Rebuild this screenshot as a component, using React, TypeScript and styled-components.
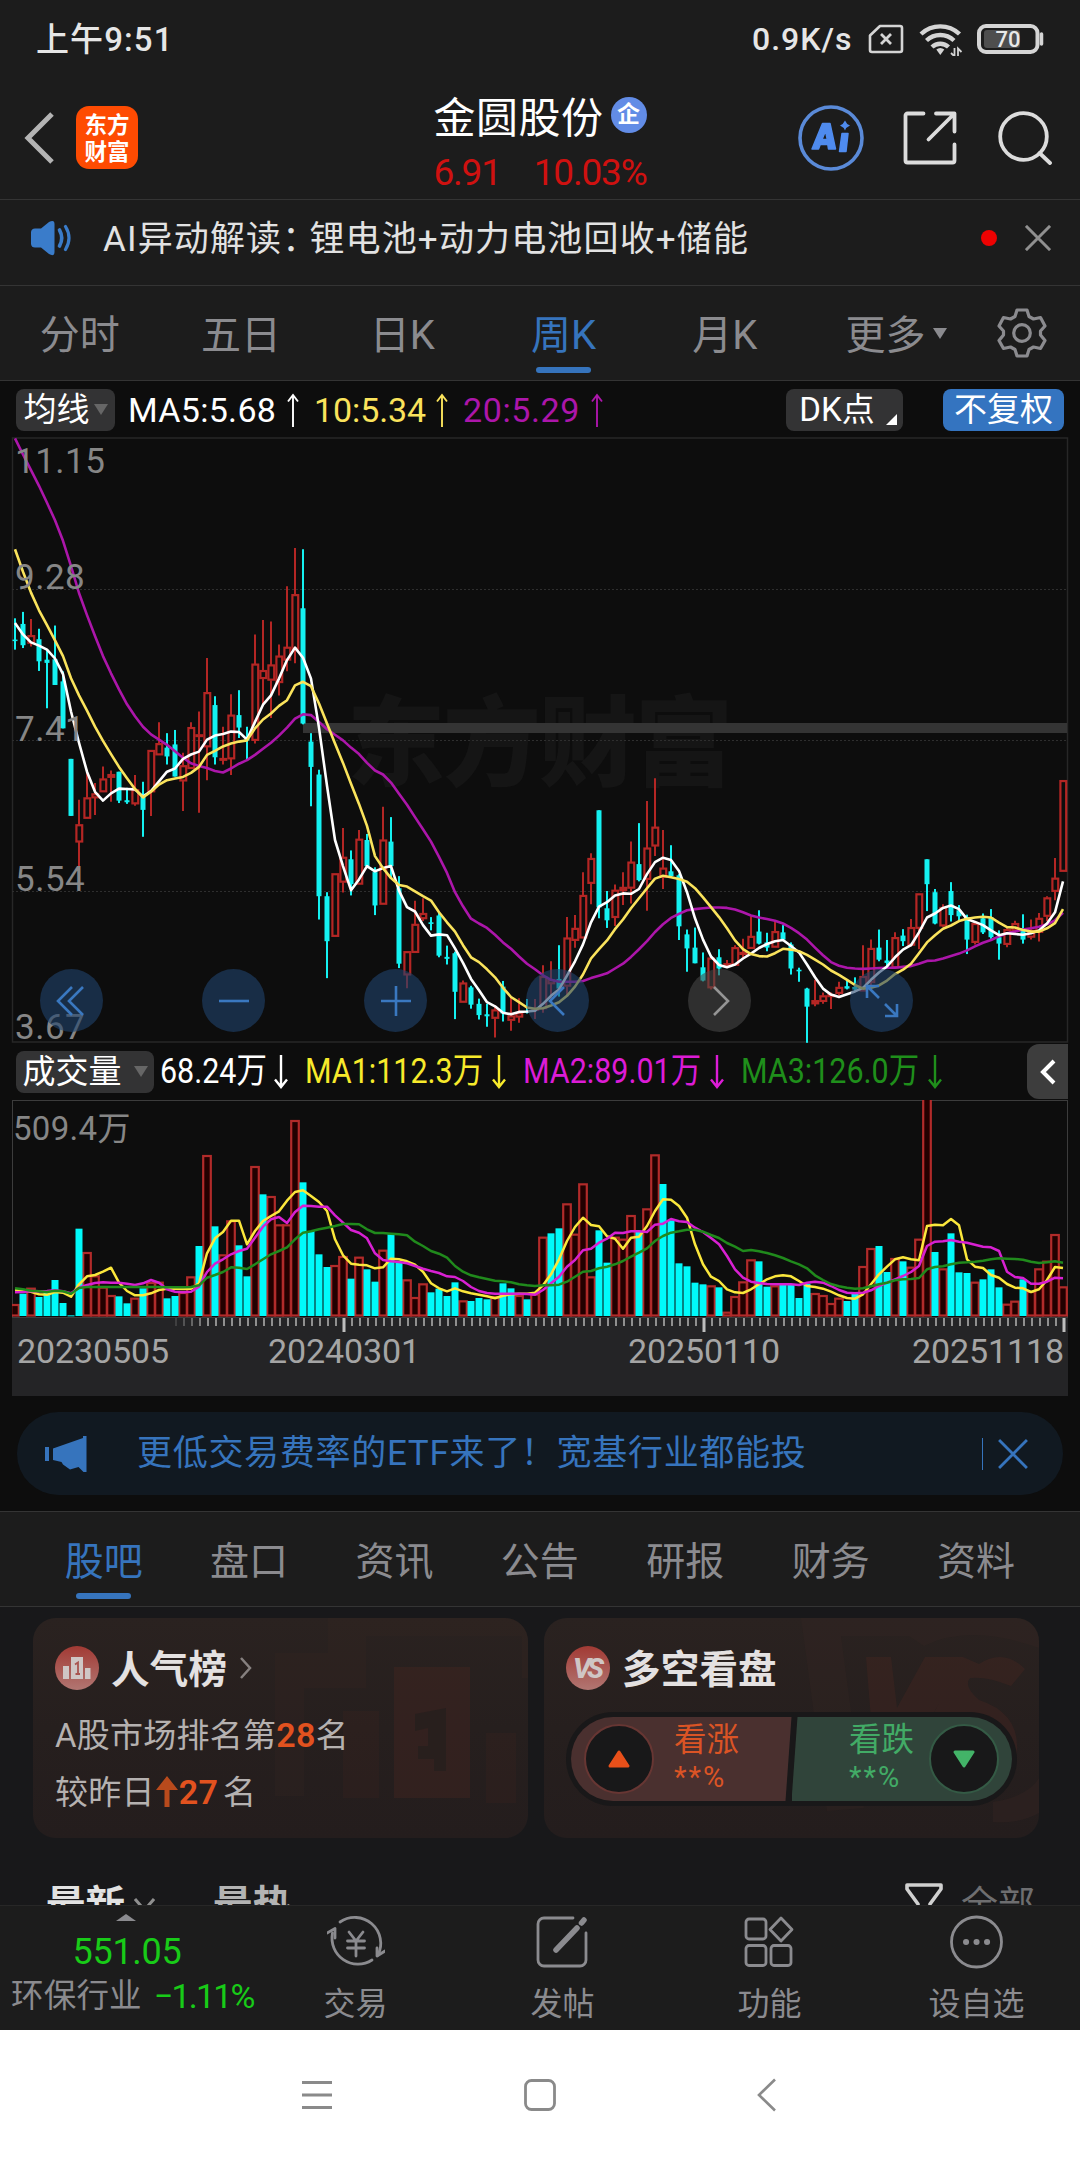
import React from "react";
import styled, { createGlobalStyle } from "styled-components";

const GlobalStyle = createGlobalStyle`
  * { box-sizing: border-box; }
  html, body { margin: 0; padding: 0; background: #ffffff; }
  body {
    font-family: Roboto, "Noto Sans CJK SC", sans-serif;
    line-height: 1;
    white-space: nowrap;
  }
  svg { display: block; flex: none; }
`;

const UP = "#b42624";
const DOWN = "#14f1f1";
const BLUE = "#3674bd";
const GREY = "#8b8b8f";

/* ---------- market data ---------- */

type Candle = [0 | 1, number, number, number, number];

// [rising, high, body top, body bottom, low] on the chart's 19..1523 vertical scale
const candles: Candle[] = [
  [0, 468, 521, 524, 546], [0, 452, 482, 535, 542], [1, 470, 511, 530, 538], [0, 494, 520, 575, 599],
  [0, 545, 571, 579, 692], [0, 486, 570, 634, 634], [0, 600, 625, 742, 742], [0, 818, 818, 960, 960],
  [1, 920, 982, 1025, 1118], [1, 845, 915, 966, 966], [1, 878, 905, 915, 958], [1, 837, 868, 900, 900],
  [1, 847, 857, 864, 925], [0, 850, 850, 922, 928], [0, 890, 921, 926, 930], [1, 858, 895, 930, 935],
  [0, 875, 905, 945, 1012], [1, 797, 797, 900, 960], [1, 727, 780, 808, 808], [0, 754, 790, 812, 832],
  [0, 746, 782, 862, 862], [1, 803, 835, 873, 948], [1, 727, 740, 842, 842], [1, 700, 758, 762, 952],
  [1, 567, 653, 788, 871], [0, 662, 684, 814, 832], [1, 738, 817, 821, 832], [1, 657, 709, 818, 858],
  [0, 647, 709, 740, 766], [0, 738, 768, 772, 820], [1, 508, 582, 772, 780], [1, 472, 598, 618, 684],
  [1, 476, 584, 622, 716], [1, 533, 562, 628, 660], [1, 388, 540, 572, 600], [1, 293, 409, 545, 580],
  [0, 296, 443, 730, 732], [0, 754, 775, 838, 936], [0, 845, 857, 1160, 1218], [0, 1150, 1160, 1272, 1364],
  [1, 1104, 1104, 1260, 1260], [1, 990, 1063, 1125, 1151], [0, 1046, 1068, 1130, 1158], [1, 995, 1018, 1130, 1130],
  [0, 1005, 1020, 1085, 1090], [0, 1088, 1100, 1183, 1207], [1, 937, 1020, 1180, 1180], [0, 963, 1024, 1085, 1115],
  [0, 1110, 1140, 1328, 1339], [1, 1298, 1298, 1356, 1389], [1, 1171, 1230, 1300, 1300], [1, 1165, 1203, 1216, 1222],
  [0, 1212, 1225, 1229, 1245], [0, 1200, 1208, 1308, 1312], [0, 1283, 1311, 1316, 1330], [0, 1298, 1302, 1398, 1466],
  [1, 1370, 1376, 1424, 1424], [0, 1383, 1387, 1430, 1440], [0, 1415, 1428, 1456, 1467], [0, 1428, 1454, 1459, 1485],
  [1, 1432, 1443, 1464, 1512], [0, 1371, 1385, 1452, 1472], [1, 1410, 1458, 1469, 1495], [1, 1414, 1450, 1461, 1475],
  [0, 1416, 1446, 1450, 1452], [1, 1416, 1440, 1444, 1466], [1, 1332, 1360, 1440, 1450], [1, 1322, 1368, 1378, 1420],
  [0, 1282, 1366, 1390, 1410], [1, 1212, 1264, 1384, 1410], [1, 1207, 1240, 1270, 1288], [1, 1100, 1158, 1264, 1264],
  [1, 1053, 1066, 1128, 1180], [0, 946, 946, 1188, 1215], [0, 1147, 1190, 1220, 1239], [1, 1131, 1145, 1213, 1234],
  [1, 1100, 1138, 1146, 1182], [1, 1024, 1075, 1140, 1178], [0, 978, 1080, 1120, 1123], [1, 923, 1040, 1118, 1196],
  [1, 866, 988, 1035, 1060], [1, 995, 1090, 1113, 1142], [0, 1033, 1098, 1110, 1112], [0, 1105, 1108, 1235, 1269],
  [0, 1243, 1255, 1290, 1348], [0, 1238, 1288, 1327, 1327], [0, 1300, 1337, 1370, 1372], [1, 1310, 1314, 1388, 1392],
  [0, 1292, 1312, 1340, 1357], [1, 1319, 1328, 1332, 1335], [1, 1282, 1288, 1332, 1332], [1, 1266, 1300, 1305, 1315],
  [1, 1210, 1260, 1290, 1290], [0, 1195, 1248, 1278, 1280], [0, 1251, 1275, 1288, 1297], [1, 1222, 1248, 1287, 1287],
  [0, 1232, 1250, 1268, 1270], [0, 1275, 1280, 1340, 1355], [0, 1338, 1343, 1347, 1373], [0, 1388, 1390, 1435, 1525],
  [1, 1368, 1420, 1428, 1434], [1, 1400, 1408, 1422, 1428], [1, 1400, 1405, 1410, 1441], [1, 1373, 1387, 1402, 1408],
  [0, 1370, 1384, 1390, 1392], [0, 1362, 1386, 1392, 1396], [1, 1282, 1360, 1396, 1396], [1, 1268, 1290, 1375, 1382],
  [0, 1243, 1288, 1318, 1322], [0, 1269, 1320, 1326, 1336], [1, 1250, 1263, 1338, 1338], [0, 1242, 1258, 1272, 1284],
  [1, 1217, 1238, 1282, 1285], [1, 1154, 1154, 1240, 1292], [0, 1068, 1068, 1130, 1197], [0, 1142, 1150, 1228, 1230],
  [1, 1180, 1188, 1234, 1236], [0, 1125, 1147, 1207, 1223], [0, 1182, 1195, 1210, 1224], [0, 1206, 1212, 1268, 1304],
  [1, 1222, 1228, 1275, 1280], [0, 1203, 1215, 1250, 1254], [0, 1192, 1212, 1262, 1266], [0, 1245, 1262, 1278, 1318],
  [1, 1236, 1243, 1280, 1287], [1, 1221, 1228, 1246, 1252], [0, 1205, 1240, 1268, 1278], [1, 1218, 1245, 1262, 1268],
  [1, 1202, 1215, 1250, 1273], [1, 1160, 1164, 1210, 1222], [1, 1065, 1115, 1148, 1170], [1, 872, 872, 1098, 1098],
];

const ma5 = [
  480, 508, 528, 536, 546, 568, 607, 700, 778, 850, 900, 922, 904, 892, 893, 894, 912, 898, 874, 850, 842, 818,
  807, 800, 770, 760, 756, 750, 751, 770, 726, 683, 660, 618, 572, 541, 566, 618, 740, 885, 1020, 1085, 1145, 1118,
  1085, 1098, 1090, 1085, 1146, 1187, 1198, 1232, 1258, 1255, 1257, 1290, 1326, 1366, 1394, 1424, 1434, 1450, 1454,
  1448, 1447, 1445, 1428, 1408, 1392, 1358, 1322, 1280, 1225, 1186, 1175, 1158, 1153, 1154, 1142, 1105, 1075, 1064,
  1070, 1097, 1150, 1215, 1268, 1310, 1331, 1337, 1330, 1315, 1303, 1289, 1279, 1272, 1269, 1284, 1300, 1330, 1362,
  1390, 1405, 1411, 1404, 1397, 1388, 1368, 1350, 1335, 1312, 1293, 1282, 1250, 1213, 1203, 1189, 1183, 1192, 1217,
  1224, 1232, 1245, 1257, 1252, 1254, 1256, 1252, 1245, 1228, 1200, 1123,
];

const ma10 = [
  296, 352, 404, 448, 485, 523, 562, 617, 660, 698, 738, 773, 806, 838, 866, 893, 914, 900, 882, 871, 867, 863, 853,
  838, 808, 798, 787, 780, 775, 772, 742, 720, 705, 686, 672, 635, 626, 637, 680, 730, 780, 828, 880, 930, 985, 1060,
  1090, 1115, 1132, 1136, 1148, 1160, 1171, 1200, 1225, 1248, 1282, 1312, 1324, 1342, 1362, 1388, 1411, 1424, 1437,
  1440, 1439, 1432, 1424, 1408, 1385, 1355, 1315, 1292, 1270, 1242, 1218, 1190, 1165, 1140, 1116, 1109, 1113, 1117,
  1124, 1140, 1163, 1187, 1212, 1240, 1270, 1292, 1304, 1309, 1310, 1302, 1291, 1293, 1297, 1306, 1318, 1330, 1345,
  1356, 1368, 1381, 1390, 1388, 1382, 1370, 1354, 1343, 1328, 1302, 1275, 1257, 1241, 1233, 1222, 1216, 1213, 1211,
  1213, 1226, 1237, 1238, 1244, 1248, 1248, 1240, 1227, 1192,
];

const ma20 = [
  20, 60, 99, 138, 180, 224, 275, 338, 405, 460, 512, 562, 605, 645, 682, 712, 738, 757, 770, 783, 799, 815, 829, 836,
  841, 848, 852, 842, 830, 821, 808, 793, 778, 760, 740, 718, 707, 709, 726, 744, 758, 772, 790, 806, 828, 847, 857,
  877, 905, 932, 963, 993, 1024, 1062, 1102, 1150, 1185, 1216, 1228, 1239, 1256, 1275, 1291, 1310, 1328, 1342, 1357,
  1368, 1373, 1373, 1373, 1371, 1364, 1358, 1352, 1340, 1328, 1311, 1292, 1272, 1249, 1230, 1214, 1204, 1195, 1192,
  1190, 1188, 1188, 1189, 1193, 1200, 1208, 1213, 1217, 1221, 1228, 1239, 1252, 1268, 1288, 1307, 1324, 1333, 1338,
  1340, 1341, 1340, 1339, 1338, 1338, 1336, 1334, 1328, 1321, 1320, 1315, 1309, 1303, 1295, 1285, 1276, 1269, 1260,
  1252, 1248, 1243, 1240, 1236, 1230, 1220, 1201,
];

// bar tops on the volume chart's 212..860 vertical scale
const volumes = [
  824, 793, 775, 803, 788, 752, 821, 858, 598, 668, 738, 772, 797, 801, 822, 805, 777, 758, 757, 807, 800, 788, 741,
  650, 377, 591, 675, 573, 648, 741, 410, 495, 500, 585, 585, 272, 459, 605, 675, 713, 707, 680, 748, 682, 720, 757,
  661, 615, 700, 750, 803, 762, 789, 778, 800, 759, 813, 815, 806, 810, 800, 762, 777, 797, 810, 793, 622, 612, 597,
  522, 613, 462, 741, 603, 700, 622, 628, 557, 605, 537, 375, 464, 573, 702, 711, 760, 765, 768, 774, 847, 800, 756,
  690, 696, 772, 768, 765, 765, 806, 763, 791, 797, 821, 805, 815, 793, 710, 656, 650, 728, 686, 696, 712, 628, 200,
  668, 717, 612, 729, 731, 757, 750, 720, 774, 823, 814, 750, 785, 717, 694, 614, 771,
];
// weeks whose volume bar is drawn hollow (rising)
const risingVolume = new Set([
  0, 2, 9, 10, 11, 12, 15, 17, 18, 21, 22, 24, 26, 27, 30, 32, 33, 34, 35, 40, 41, 43, 46, 49, 50, 51, 56, 60, 63, 65,
  66, 69, 70, 71, 72, 75, 76, 77, 79, 80, 87, 89, 90, 91, 92, 95, 100, 101, 102, 103, 106, 107, 110, 112, 113, 114,
  116, 120, 124, 125, 127, 128, 129, 130, 131,
]);

const vma1 = [
  782, 783, 787, 795, 796, 788, 790, 802, 765, 741, 737, 727, 715, 760, 785, 798, 798, 792, 782, 778, 778, 779, 778,
  762, 672, 627, 608, 574, 574, 645, 605, 575, 560, 546, 514, 488, 483, 500, 518, 545, 630, 678, 703, 706, 708, 717,
  714, 688, 690, 696, 706, 727, 762, 777, 786, 777, 786, 792, 796, 801, 807, 799, 795, 793, 793, 790, 768, 735, 690,
  635, 593, 565, 587, 591, 621, 628, 658, 625, 622, 590, 545, 510, 511, 530, 565, 645, 705, 742, 755, 780, 789, 791,
  780, 765, 750, 741, 738, 741, 755, 770, 773, 778, 787, 798, 806, 808, 795, 765, 735, 712, 690, 684, 690, 693, 590,
  586, 588, 569, 588, 690, 712, 716, 737, 745, 764, 775, 777, 788, 780, 752, 713, 716,
];
const vma2 = [
  789, 788, 785, 786, 785, 783, 786, 792, 775, 767, 761, 759, 760, 760, 763, 767, 762, 752, 760, 780, 787, 789, 787,
  772, 728, 703, 690, 675, 665, 658, 625, 592, 570, 563, 581, 548, 529, 530, 532, 532, 558, 580, 602, 610, 627, 672,
  692, 696, 698, 702, 710, 718, 725, 731, 741, 743, 755, 773, 785, 791, 793, 793, 793, 793, 794, 796, 782, 762, 742,
  712, 692, 663, 658, 640, 628, 610, 611, 606, 606, 608, 586, 583, 569, 576, 578, 595, 608, 626, 645, 680, 720, 745,
  757, 761, 764, 765, 765, 765, 767, 760, 757, 760, 770, 782, 790, 792, 790, 783, 770, 760, 750, 740, 728, 710, 650,
  637, 636, 632, 637, 640, 646, 652, 654, 665, 727, 743, 746, 763, 763, 757, 745, 747,
];
const vma3 = [
  777, 780, 784, 786, 788, 784, 786, 793, 776, 773, 773, 773, 773, 773, 773, 773, 773, 773, 773, 774, 774, 774, 773,
  768, 745, 737, 728, 714, 715, 719, 705, 690, 675, 665, 654, 630, 610, 606, 600, 595, 590, 584, 584, 585, 600, 611,
  611, 613, 615, 618, 637, 650, 665, 673, 685, 710, 727, 738, 744, 749, 754, 756, 759, 765, 768, 770, 768, 768, 766,
  757, 742, 727, 725, 717, 712, 705, 695, 682, 670, 657, 635, 620, 610, 606, 601, 601, 607, 617, 626, 641, 652, 665,
  662, 666, 671, 678, 686, 696, 705, 717, 738, 752, 764, 771, 775, 778, 777, 771, 765, 760, 753, 750, 749, 746, 720,
  713, 711, 705, 700, 699, 697, 694, 690, 687, 688, 689, 691, 697, 701, 699, 696, 700,
];

/* ---------- page frame ---------- */

const Page = styled.div`
  width: 1080px;
  height: 2160px;
  overflow: hidden;
  display: flex;
  flex-direction: column;
  background: #0d0d0d;
`;

const StatusBar = styled.div`
  height: 78px;
  flex: none;
  padding: 0 34px 0 36px;
  display: flex;
  align-items: center;
  justify-content: space-between;
  background: #1c1c1c;
  color: #e6e6e6;
  font-size: 33px;
  font-weight: 500;
`;
const Clock = styled.span`
  letter-spacing: 1.1px;
`;
const StatusIcons = styled.div`
  display: flex;
  align-items: center;
`;
const NetSpeed = styled.span`
  width: 116px;
  font-size: 32px;
  letter-spacing: 1px;
`;

const Header = styled.header`
  height: 122px;
  flex: none;
  display: grid;
  grid-template-columns: 360px 360px 360px;
  background: #1c1c1c;
  border-bottom: 1px solid #343434;
`;
const HeaderLeft = styled.div`
  display: flex;
  align-items: center;
  gap: 21px;
  padding: 0 0 2px 24px;
`;
const AppLogo = styled.div`
  width: 62px;
  height: 63px;
  border-radius: 13px;
  background: #fe4b02;
  color: #fff;
  display: flex;
  flex-direction: column;
  align-items: center;
  justify-content: center;
  padding-bottom: 2px;
  font: 700 22.5px/26.5px "Noto Sans CJK SC", sans-serif;
`;
const HeaderMid = styled.div`
  display: flex;
  flex-direction: column;
  align-items: center;
  padding-top: 16px;
`;
const StockName = styled.div`
  display: flex;
  align-items: flex-start;
  height: 59px;
  gap: 7px;
  color: #fff;
  font-size: 42px;
  line-height: 49px;
  letter-spacing: 0.5px;
`;
const CertBadge = styled.span`
  width: 36px;
  height: 36px;
  margin-top: 3px;
  border-radius: 50%;
  background: #628ce6;
  font-size: 23px;
  font-weight: 700;
  line-height: 35px;
  text-align: center;
  letter-spacing: 0;
`;
const Quote = styled.div`
  display: flex;
  gap: 33px;
  color: #cf1110;
  font-size: 37px;
  line-height: 40px;
  letter-spacing: -1.2px;
`;
const HeaderRight = styled.div`
  display: flex;
  align-items: center;
  justify-content: flex-end;
  padding: 0 28px 1px 0;
  & > :nth-child(1) { margin-right: 39px; }
  & > :nth-child(2) { margin-right: 41px; }
`;

const Notice = styled.div`
  height: 86px;
  flex: none;
  display: flex;
  align-items: center;
  padding: 0 29px 10px 30px;
  background: #1c1c1c;
  border-bottom: 1px solid #343434;
`;
const NoticeText = styled.span`
  margin-left: 31px;
  padding-top: 3px;
  flex: 1;
  color: #e2e2e2;
  font-size: 35px;
  letter-spacing: 1.15px;
`;
const NoticeColon = styled.span`
  margin-right: -9px;
`;
const RedDot = styled.i`
  width: 16px;
  height: 16px;
  margin-right: 28px;
  border-radius: 50%;
  background: #ee0202;
`;

const PeriodTabs = styled.nav`
  height: 95px;
  flex: none;
  display: grid;
  grid-template-columns: repeat(6, 161.3px) 1fr;
  background: #1c1c1c;
  border-bottom: 1px solid #343434;
`;
const PeriodTab = styled.div<{ $on?: boolean }>`
  display: flex;
  flex-direction: column;
  align-items: center;
  padding: 27px 2px 0 0;
  gap: 9px;
  font-size: 40px;
  line-height: 45px;
  color: ${(p) => (p.$on ? BLUE : GREY)};
`;
const MoreTab = styled.div`
  display: flex;
  align-items: flex-start;
  padding: 27px 0 0 39px;
  gap: 8px;
  font-size: 40px;
  line-height: 45px;
  color: ${GREY};
`;
const Underline = styled.i`
  width: 55px;
  height: 6px;
  border-radius: 3px;
  background: ${BLUE};
`;
const SettingsCell = styled.div`
  display: flex;
  justify-content: center;
  padding: 22px 3px 0 0;
`;
const Caret = styled.i<{ $w: number; $h: number; $c: string; $drop?: number }>`
  width: 0;
  height: 0;
  margin-top: ${(p) => p.$drop ?? 0}px;
  border-left: ${(p) => p.$w / 2}px solid transparent;
  border-right: ${(p) => p.$w / 2}px solid transparent;
  border-top: ${(p) => p.$h}px solid ${(p) => p.$c};
`;

/* ---------- chart panel ---------- */

const ChartPanel = styled.section`
  flex: none;
  height: 1130px;
  background: #0d0d0d;
`;
const AverageRow = styled.div`
  height: 57px;
  padding: 0 16px;
  display: flex;
  align-items: center;
`;
const Chip = styled.div<{ $w: number; $bg?: string; $gap?: number; $after?: number }>`
  width: ${(p) => p.$w}px;
  height: 42px;
  flex: none;
  margin-right: ${(p) => p.$after ?? 0}px;
  border-radius: 8px;
  background: ${(p) => p.$bg ?? "#333334"};
  color: #fff;
  font-size: 33px;
  display: flex;
  align-items: center;
  justify-content: center;
  gap: ${(p) => p.$gap ?? 4}px;
`;
const CornerMark = styled.i`
  align-self: flex-end;
  margin: 0 -7px 6px 7px;
  border-left: 11px solid transparent;
  border-bottom: 11px solid #fff;
`;
const AverageValue = styled.div<{ $c: string; $w: number; $ls: number }>`
  width: ${(p) => p.$w}px;
  display: flex;
  align-items: center;
  justify-content: space-between;
  padding-right: 14px;
  color: ${(p) => p.$c};
  font-size: 34px;
  letter-spacing: ${(p) => p.$ls}px;
`;
const Spring = styled.div`
  flex: 1;
`;

const PriceChart = styled.div`
  position: relative;
  width: 1056px;
  height: 605px;
  margin-left: 12px;
`;
const ChartControls = styled.div`
  position: absolute;
  left: 28px;
  top: 531px;
  display: flex;
  gap: 99px;
`;
const RoundControl = styled.div<{ $grey?: boolean }>`
  width: 63px;
  height: 63px;
  border-radius: 50%;
  display: flex;
  align-items: center;
  justify-content: center;
  color: ${(p) => (p.$grey ? "#959595" : "#3a78c0")};
  background: ${(p) => (p.$grey ? "rgba(72,72,72,.58)" : "rgba(32,66,108,.6)")};
`;

const VolumeRow = styled.div`
  height: 57px;
  padding: 0 12px 0 16px;
  display: flex;
  align-items: center;
`;
const VolumeValue = styled.div<{ $c: string; $w: number; $text: number }>`
  width: ${(p) => p.$w}px;
  display: flex;
  align-items: center;
  gap: 9px;
  color: ${(p) => p.$c};
  font-size: 35px;
  & > div { width: ${(p) => p.$text}px; }
`;
const Narrow = styled.span`
  display: inline-block;
  transform: scaleX(0.87);
  transform-origin: left;
`;
const CollapseButton = styled.div`
  width: 41px;
  height: 55px;
  border-radius: 12px 0 0 12px;
  background: #3d3d3d;
  display: flex;
  align-items: center;
  justify-content: center;
`;
const VolumeChart = styled.div`
  width: 1056px;
  height: 218px;
  margin-left: 12px;
`;
const TimeAxis = styled.div`
  width: 1056px;
  height: 78px;
  margin-left: 12px;
  background: #242426;
`;
const DateRow = styled.div`
  display: grid;
  grid-template-columns: 251px 360px 1fr auto;
  padding: 0 4px 0 5px;
  margin-top: -2px;
  color: #a5a5a5;
  font-size: 34px;
  line-height: 36px;
  letter-spacing: -0.1px;
`;

const Banner = styled.div`
  height: 83px;
  margin: 16px 17px 0;
  padding: 0 35px 0 28px;
  border-radius: 42px;
  background: #111921;
  color: ${BLUE};
  display: flex;
  align-items: center;
`;
const BannerText = styled.span`
  flex: 1;
  margin-left: 50px;
  font-size: 35px;
  letter-spacing: 0.7px;
`;
const BannerDivider = styled.i`
  width: 1px;
  height: 32px;
  margin-right: 15px;
  background: ${BLUE};
`;

/* ---------- community ---------- */

const SectionTabs = styled.nav`
  height: 96px;
  flex: none;
  display: grid;
  grid-template-columns: repeat(7, 145.4px);
  padding-left: 31px;
  background: #1c1c1c;
  border-top: 1px solid #343434;
  border-bottom: 1px solid #343434;
`;
const SectionTab = styled.div<{ $on?: boolean }>`
  display: flex;
  flex-direction: column;
  align-items: center;
  padding-top: 27px;
  gap: 8px;
  font-size: 39px;
  line-height: 46px;
  color: ${(p) => (p.$on ? BLUE : GREY)};
`;

const Community = styled.section`
  height: 298px;
  flex: none;
  overflow: hidden;
  background: #18181a;
  padding: 11px 41px 0 33px;
`;
const CardRow = styled.div`
  display: grid;
  grid-template-columns: 495px 495px;
  gap: 16px;
`;
const Card = styled.article`
  position: relative;
  height: 220px;
  border-radius: 23px;
  overflow: hidden;
  padding: 28px 22px 0;
  background: linear-gradient(#2a2220, #261f1e 50%, #241d1d);
`;
const CardArt = styled.svg`
  position: absolute;
  right: 0;
  top: 0;
`;
const CardTitle = styled.h3`
  position: relative;
  margin: 0;
  display: flex;
  align-items: center;
  height: 44px;
  color: #e4e1e1;
  font-size: 38.5px;
  font-weight: 600;
  letter-spacing: 0.2px;
  gap: 12px;
`;
const CardName = styled.span`
  padding-top: 4px;
`;
const RankLine = styled.p<{ $top: number }>`
  position: relative;
  margin: ${(p) => p.$top}px 0 0;
  height: 40px;
  display: flex;
  align-items: center;
  color: #b5b1b0;
  font-size: 33px;
  letter-spacing: 0.25px;
`;
const RankNumber = styled.b<{ $gap?: number }>`
  color: #e2521f;
  font-size: 34px;
  font-weight: 600;
  margin-right: ${(p) => p.$gap ?? 0}px;
`;
const VoteBar = styled.div`
  position: relative;
  width: 451px;
  height: 94px;
  margin-top: 22px;
  padding: 5px;
  border-radius: 47px;
  background: #191819;
  display: flex;
`;
const VoteSide = styled.div<{ $down?: boolean }>`
  width: 220.5px;
  height: 84px;
  flex: none;
  display: flex;
  align-items: center;
  justify-content: ${(p) => (p.$down ? "flex-end" : "flex-start")};
  gap: ${(p) => (p.$down ? 15 : 20)}px;
  padding: 0 13px;
  color: ${(p) => (p.$down ? "#42ab66" : "#db5425")};
  background: ${(p) => (p.$down ? "#30443a" : "#4a302f")};
  border-radius: ${(p) => (p.$down ? "0 42px 42px 0" : "42px 0 0 42px")};
  clip-path: ${(p) =>
    p.$down ? "polygon(6px 0, 100% 0, 100% 100%, 0 100%)" : "polygon(0 0, 100% 0, calc(100% - 6px) 100%, 0 100%)"};
`;
const VoteCircle = styled.div<{ $down?: boolean }>`
  width: 70px;
  height: 70px;
  flex: none;
  border-radius: 50%;
  border: 2px solid ${(p) => (p.$down ? "#345a45" : "#673633")};
  background: #181819;
  display: flex;
  align-items: center;
  justify-content: center;
`;
const VoteText = styled.div`
  display: flex;
  flex-direction: column;
  font-size: 32.5px;
  line-height: 40px;
  padding-bottom: 3px;
  & > span:last-child { font-size: 29px; line-height: 35px; letter-spacing: 2px; }
`;

const PostFilter = styled.div`
  display: flex;
  align-items: flex-start;
  padding: 46px 4px 0 13px;
`;
const FilterName = styled.span<{ $c: string; $size: number; $weight?: number }>`
  color: ${(p) => p.$c};
  font-size: ${(p) => p.$size}px;
  line-height: 44px;
  font-weight: ${(p) => p.$weight ?? 400};
`;
const FilterGlyph = styled.span<{ $l: number; $r: number; $t: number }>`
  margin: ${(p) => `${p.$t}px ${p.$r}px 0 ${p.$l}px`};
`;

/* ---------- bottom bars ---------- */

const ActionBar = styled.footer`
  height: 125px;
  flex: none;
  display: grid;
  grid-template-columns: 252px repeat(4, 207px);
  background: #1c1c1c;
  border-top: 1px solid #272727;
`;
const SectorCell = styled.div`
  display: flex;
  flex-direction: column;
  align-items: center;
  padding-top: 8px;
`;
const SectorIndex = styled.div`
  margin-top: 10px;
  padding-left: 2px;
  color: #18cb18;
  font-size: 36px;
  line-height: 42px;
  letter-spacing: -0.3px;
`;
const SectorLine = styled.div`
  width: 100%;
  padding-left: 11px;
  margin-top: 1px;
  display: flex;
  align-items: center;
  gap: 12px;
  color: ${GREY};
  font-size: 32.5px;
  line-height: 44px;
  letter-spacing: 0.2px;
  & > b { color: #18cb18; font-weight: 400; font-size: 34px; letter-spacing: -1.8px; }
`;
const Action = styled.div`
  display: flex;
  flex-direction: column;
  align-items: center;
  padding-top: 8px;
  gap: 12px;
  color: ${GREY};
  font-size: 32px;
  line-height: 44px;
`;
const SystemNav = styled.div`
  height: 130px;
  flex: none;
  background: #fff;
  color: #8a8a8a;
  display: flex;
  justify-content: center;
  align-items: center;
  gap: 190px;
`;

/* ---------- drawings ---------- */

const ArrowMark = ({ down, thin }: { down?: boolean; thin?: boolean }) => (
  <svg width="14" height="34" viewBox="0 0 14 34" fill="none" stroke="currentColor" strokeWidth={thin ? 1.9 : 2.4}>
    <path d={down ? "M7 0V32M1 24.5L7 32L13 24.5" : "M7 34V2M2 8.500L7 2L12 8.500"} />
  </svg>
);

const Cross = ({ size, width, color }: { size: number; width: number; color: string }) => (
  <svg width={size} height={size} viewBox="0 0 28 28" stroke={color} strokeWidth={width}>
    <path d="M1 1L27 27M27 1L1 27" />
  </svg>
);

const StatusGlyphs = () => (
  <svg width="178" height="34" viewBox="0 0 178 34" fill="none" stroke="#d5d5d5">
    <path d="M12 4H32a2 2 0 0 1 2 2V28a2 2 0 0 1-2 2H4a2 2 0 0 1-2-2V13.500Z" strokeWidth="2.600" strokeLinejoin="round" />
    <path d="M13 12l10 10M23 12l-10 10" strokeWidth="2.800" />
    <path d="M53 12a28 28 0 0 1 38.500 0M58.500 18.500a20 20 0 0 1 27.500 0M64 25a12 12 0 0 1 16.500 0" strokeWidth="4.400" />
    <path d="M72.300 26a7 7 0 0 1 4 1.500L72.300 33l-4-5.500a7 7 0 0 1 4-1.500z" fill="#d5d5d5" stroke="none" />
    <path d="M86.500 26v9M83 31l3.500 3.500M90 35v-8.500l3.500 3.500" strokeWidth="1.800" />
    <rect x="111" y="4" width="58.500" height="26" rx="7" strokeWidth="4" />
    <rect x="116" y="8" width="36" height="18" rx="3" fill="#4e4e4e" stroke="none" />
    <path d="M173.500 12v10" strokeWidth="3.500" strokeLinecap="round" />
    <text x="140" y="25" textAnchor="middle" fontFamily="Roboto" fontWeight="500" fontSize="22" fill="#e8e8e8" stroke="none">
      70
    </text>
  </svg>
);

const AiGlyph = () => (
  <svg width="66" height="66" viewBox="0 0 66 66" fill="none">
    <circle cx="33" cy="33" r="31" stroke="#5a8ad8" strokeWidth="3.600" />
    <path
      fill="#4f8bee"
      fillRule="evenodd"
      stroke="#4f8bee"
      strokeWidth="1.500"
      strokeLinejoin="round"
      d="M24.500 18.500H32L37.500 44H30.500L29.800 39.500H22.200L20.500 44H14ZM27.500 26L24 34.500H29.300Z"
    />
    <path fill="#4f8bee" stroke="#4f8bee" strokeWidth="1.500" strokeLinejoin="round" d="M44 28.500H50L48 46.500H41.500Z" />
    <path fill="#4f8bee" d="M47 15.500Q48.300 19 52 20.500Q48.300 22 47 25.500Q45.500 22 42 20.500Q45.500 19 47 15.500Z" />
  </svg>
);

const ShareGlyph = () => (
  <svg width="54" height="54" viewBox="0 0 54 54" fill="none" stroke="#dcdcdc" strokeWidth="3.800" strokeLinecap="round" strokeLinejoin="round">
    <path d="M20.500 2.500H4.500a2 2 0 0 0-2 2V49.500a2 2 0 0 0 2 2H49.500a2 2 0 0 0 2-2V33.500" />
    <path d="M33 2.500H51.500V20.500M51 3L25.500 28.500" />
  </svg>
);

const SearchGlyph = () => (
  <svg width="54" height="54" viewBox="0 0 54 54" fill="none" stroke="#dcdcdc" strokeWidth="3.800" strokeLinecap="round">
    <circle cx="25.500" cy="25.500" r="23.300" />
    <path d="M41.500 42L52 52" />
  </svg>
);

const SpeakerGlyph = () => (
  <svg width="42" height="36" viewBox="0 0 42 36" fill="none">
    <path d="M1 12a4 4 0 0 1 4-3.500H11L19 2Q24.500 -1 24.500 4V32Q24.500 37 19 34L11 27.500H5A4 4 0 0 1 1 24Z" fill="#3a7cca" />
    <path d="M29.500 10Q34 18 29.500 26" stroke="#3a7cca" strokeWidth="3.600" strokeLinecap="round" />
    <path d="M35.500 6.500Q42.500 18 35.500 29.500" stroke="#3a7cca" strokeWidth="3.200" strokeLinecap="round" />
  </svg>
);

const GearGlyph = () => (
  <svg width="50" height="50" viewBox="0 0 50 50" fill="none" stroke={GREY} strokeWidth="3.200" strokeLinejoin="round">
    <path d="M20 2H30L32 8.500L36.500 11L43.500 9.500L48 18L43.500 23V27L48 32.500L43.500 40.500L36.500 39L32 41.500L30 48H20L18 41.500L13.500 39L6.500 40.500L2 32.500L6.500 27V23L2 18L6.500 9.500L13.500 11L18 8.500Z" />
    <circle cx="25" cy="25" r="8.300" />
  </svg>
);

const MegaphoneGlyph = () => (
  <svg width="42" height="36" viewBox="0 0 42 36" fill="#3674bd">
    <path d="M0 11H4V25H0ZM8 12.500L38 2V0H41.500V36H38.500L33.500 31L25 33.500L18 28.500L16.500 26L8 24Z" />
  </svg>
);

const px = (i: number) => 3 + 8 * i;
const priceY = (v: number) => ((v - 19) * 604) / 1504;
const volumeY = (v: number) => (v - 212) / 3;
const points = (values: number[], y: (v: number) => number) =>
  values.map((v, i) => `${px(i)},${y(v).toFixed(1)}`).join(" ");

const PricePlot = () => (
  <svg width="1056" height="605" viewBox="0 0 1056 605" overflow="visible">
    <rect x="0.500" y="0" width="1055" height="604" fill="none" stroke="#272727" strokeWidth="1.500" />
    <text x="335" y="340" fontFamily="'Noto Sans CJK SC'" fontWeight="900" fontSize="98" letterSpacing="-2" fill="#151515">
      东方财富
    </text>
    {[151.5, 302.5, 453.5].map((y) => (
      <line key={y} x1="0" x2="1056" y1={y} y2={y} stroke="#2e2e2e" strokeDasharray="2 2" />
    ))}
    <rect x="291" y="285" width="764" height="10" fill="#343434" />
    {candles.map(([up, high, top, bottom, low], i) => {
      const x = px(i);
      const t = priceY(top);
      const b = Math.max(priceY(bottom), t + 1.5);
      return up ? (
        <g key={i} stroke={UP} strokeWidth="2" fill="none">
          <path d={`M${x} ${priceY(high)}V${t}M${x} ${b}V${priceY(low)}`} />
          <rect x={x - 2.6} y={t + 0.5} width="5.800" height={Math.max(b - t - 1, 0.8)} strokeWidth="2.200" />
        </g>
      ) : (
        <g key={i} fill={DOWN}>
          <rect x={x - 1} y={priceY(high)} width="2" height={priceY(low) - priceY(high)} />
          <rect x={x - 2.5} y={t} width="5" height={b - t} />
        </g>
      );
    })}
    <g fill="none" strokeWidth="2.600" strokeLinejoin="round">
      <polyline points={points(ma20, priceY)} stroke="#ac16aa" />
      <polyline points={points(ma5, priceY)} stroke="#ffffff" />
      <polyline points={points(ma10, priceY)} stroke="#fae35c" />
    </g>
    <g fontFamily="Roboto" fontSize="35" fill="#868686" letterSpacing="0.500">
      <text x="3" y="35">11.15</text>
      <text x="3" y="150.500">9.28</text>
      <text x="3" y="302.500">7.41</text>
      <text x="3" y="453">5.54</text>
      <text x="3" y="600.500">3.67</text>
    </g>
  </svg>
);

const VolumePlot = () => (
  <svg width="1056" height="218" viewBox="0 0 1056 218">
    <rect x="0.500" y="0.500" width="1055" height="217" fill="none" stroke="#3c3c3c" />
    {volumes.map((v, i) =>
      risingVolume.has(i) ? (
        <rect key={i} x={px(i) - 3.8} y={volumeY(v) + 1} width="7.600" height={214.500 - volumeY(v)} fill="#220000" stroke="#b12b2a" strokeWidth="2.200" />
      ) : null
    )}
    {volumes.map((v, i) =>
      risingVolume.has(i) ? null : (
        <rect key={i} x={px(i) - 3.5} y={volumeY(v)} width="7" height={Math.max(216 - volumeY(v), 1)} fill="#00fafa" />
      )
    )}
    <g fill="none" strokeWidth="2.500" strokeLinejoin="round">
      <polyline points={points(vma1, volumeY)} stroke="#fbe73c" />
      <polyline points={points(vma2, volumeY)} stroke="#d820d2" />
      <polyline points={points(vma3, volumeY)} stroke="#208a1c" />
    </g>
    <text x="1" y="40" fontFamily="Roboto, 'Noto Sans CJK SC'" fontSize="33" letterSpacing="0.300" fill="#868686">
      509.4万
    </text>
  </svg>
);

const AxisTicks = () => (
  <svg width="1056" height="17" viewBox="0 0 1056 17">
    {Array.from({ length: 112 }, (_, k) => k + 20).map((i) => {
      const major = i === 41 || i === 86 || i === 131;
      return (
        <rect
          key={i}
          x={px(i) - (major ? 0.5 : 0)}
          y="0"
          width={major ? 3 : 2}
          height={major ? 14 : 8}
          fill={major ? "#bdbdbd" : "#8f8f8f"}
          opacity={i < 24 ? 0.25 + (i - 20) * 0.18 : 1}
        />
      );
    })}
  </svg>
);

const controlPaths = [
  "M11 -14L-3 0L11 14M0 -14L-14 0L0 14",
  "M-15 0H15",
  "M-15 0H15M0 -15V15",
  "M6 -14L-8 0L6 14",
  "M-6 -14L8 0L-6 14",
  "M-15 -3V-15H-3M-14 -14L-3 -3M15 3V15H3M14 14L3 3",
];

const PodiumArt = () => (
  <CardArt width="260" height="220" viewBox="0 0 260 220">
    <path d="M7 178V35H60V0H260V60H254V18H98V70H36V178Z" fill="#3a2924" opacity=".2" />
    <path d="M75 93H111V180H75ZM218 115H248V185H218Z" fill="#3e2522" opacity=".28" />
    <path d="M126 49H202V180H126Z" fill="#4a2622" opacity=".36" />
    <path d="M147 96L178 90V153H166V141H150V128H160V110L147 113Z" fill="#271e1d" opacity=".85" />
  </CardArt>
);

const VersusArt = () => (
  <CardArt width="260" height="220" viewBox="0 0 260 220">
    <path d="M22 0L48 193L85 190L62 18H130L145 28Q190 5 260 30V0Z" fill="#3a2924" opacity=".22" />
    <path
      d="M87 39H112L118 90L146 39H184L200 46Q225 30 246 51L232 68Q208 58 191 60Q184 68 200 82Q240 95 238 132Q236 170 190 176Q150 180 120 165L160 85L125 150H96Z"
      fill="#4a2622"
      opacity=".36"
    />
    <path d="M214 184Q250 178 260 160V195Q240 206 214 204Z" fill="#3a2924" opacity=".3" />
  </CardArt>
);

const PodiumBadge = () => (
  <svg width="44" height="44" viewBox="0 0 44 44">
    <defs>
      <linearGradient id="badge" x1="0" y1="0" x2="0" y2="1">
        <stop offset="0" stopColor="#a23a34" />
        <stop offset="1" stopColor="#b17672" />
      </linearGradient>
    </defs>
    <circle cx="22" cy="22" r="22" fill="url(#badge)" />
    <path d="M8 20h6v13H8zM16 11h12v22H16zM30 22h5.500v11h-5.500z" fill="#cfc6c5" />
    <path d="M20 18.500l3-2v11M20.500 28h4.500" stroke="#a9544f" strokeWidth="1.800" fill="none" />
  </svg>
);

const VersusBadge = () => (
  <svg width="44" height="44" viewBox="0 0 44 44">
    <circle cx="22" cy="22" r="22" fill="url(#badge)" />
    <text x="20.500" y="32" textAnchor="middle" fontFamily="Roboto" fontWeight="800" fontStyle="italic" fontSize="28" letterSpacing="-4" fill="#cfc6c5" textLength="27" lengthAdjust="spacingAndGlyphs">
      VS
    </text>
  </svg>
);

const actions: { name: string; art: React.ReactNode }[] = [
  {
    name: "交易",
    art: (
      <>
        <path d="M13 8A26 26 0 0 1 51 41M45 46A26 26 0 0 1 5.500 19" />
        <path d="M0 19L8 14.500V24M50 34V42L58 37" />
        <path d="M22 18L29 27L36 18M29 27V42M20.500 27H37.500M20.500 34H37.500" />
      </>
    ),
  },
  {
    name: "发帖",
    art: (
      <>
        <path d="M39 4H10a6 6 0 0 0-6 6V46a6 6 0 0 0 6 6H46a6 6 0 0 0 6-6V19" />
        <path d="M22 36L43 14" strokeWidth="5.500" />
        <path d="M47.500 9L50 6" strokeWidth="5.500" />
      </>
    ),
  },
  {
    name: "功能",
    art: (
      <>
        <rect x="5" y="5" width="20" height="20" rx="3" />
        <path d="M40 4L51 15.500L40 27L29 15.500Z" />
        <rect x="5" y="31.500" width="20" height="20" rx="3" />
        <rect x="30" y="31.500" width="20" height="20" rx="3" />
      </>
    ),
  },
  {
    name: "设自选",
    art: (
      <>
        <circle cx="28.500" cy="28" r="25" />
        <path d="M18 28h.1M28.500 28h.1M39 28h.1" strokeWidth="6" />
      </>
    ),
  },
];

const App = () => (
  <Page>
    <GlobalStyle />
    <StatusBar>
      <Clock>上午9:51</Clock>
      <StatusIcons>
        <NetSpeed>0.9K/s</NetSpeed>
        <StatusGlyphs />
      </StatusIcons>
    </StatusBar>

    <Header>
      <HeaderLeft>
        <svg width="31" height="52" viewBox="0 0 31 52" fill="none" stroke="#b4b4b4" strokeWidth="5">
          <path d="M28 2L4 26L28 50" />
        </svg>
        <AppLogo>
          <span>东方</span>
          <span>财富</span>
        </AppLogo>
      </HeaderLeft>
      <HeaderMid>
        <StockName>
          金圆股份<CertBadge>企</CertBadge>
        </StockName>
        <Quote>
          <span>6.91</span>
          <span>10.03%</span>
        </Quote>
      </HeaderMid>
      <HeaderRight>
        <AiGlyph />
        <ShareGlyph />
        <SearchGlyph />
      </HeaderRight>
    </Header>

    <Notice>
      <SpeakerGlyph />
      <NoticeText>
        AI异动解读<NoticeColon>：</NoticeColon>锂电池+动力电池回收+储能
      </NoticeText>
      <RedDot />
      <Cross size={26} width={3.2} color="#909090" />
    </Notice>

    <PeriodTabs>
      <PeriodTab>分时</PeriodTab>
      <PeriodTab>五日</PeriodTab>
      <PeriodTab>日K</PeriodTab>
      <PeriodTab $on>
        周K
        <Underline />
      </PeriodTab>
      <PeriodTab>月K</PeriodTab>
      <MoreTab>
        更多
        <Caret $w={14} $h={11} $c={GREY} $drop={15} />
      </MoreTab>
      <SettingsCell>
        <GearGlyph />
      </SettingsCell>
    </PeriodTabs>

    <ChartPanel>
      <AverageRow>
        <Chip $w={99} $after={13}>
          均线
          <Caret $w={14} $h={11} $c="#666" />
        </Chip>
        <AverageValue $c="#ffffff" $w={186} $ls={0.3}>
          MA5:5.68
          <ArrowMark thin />
        </AverageValue>
        <AverageValue $c="#fae35c" $w={149} $ls={-0.1}>
          10:5.34
          <ArrowMark thin />
        </AverageValue>
        <AverageValue $c="#ac16aa" $w={155} $ls={0.6}>
          20:5.29
          <ArrowMark thin />
        </AverageValue>
        <Spring />
        <Chip $w={117} $after={40}>
          DK点
          <CornerMark />
        </Chip>
        <Chip $w={121} $bg="#3474c0">
          不复权
        </Chip>
      </AverageRow>

      <PriceChart>
        <PricePlot />
        <ChartControls>
          {controlPaths.map((d, i) => (
            <RoundControl key={d} $grey={i === 4}>
              <svg width="36" height="36" viewBox="-18 -18 36 36" fill="none" stroke="currentColor" strokeWidth="2.600">
                <path d={d} />
              </svg>
            </RoundControl>
          ))}
        </ChartControls>
      </PriceChart>

      <VolumeRow>
        <Chip $w={138} $gap={12} $after={6}>
          成交量
          <Caret $w={14} $h={11} $c="#666" />
        </Chip>
        <VolumeValue $c="#ffffff" $w={145} $text={105}>
          <div>
            <Narrow>68.24万</Narrow>
          </div>
          <ArrowMark down />
        </VolumeValue>
        <VolumeValue $c="#f7ea2b" $w={218} $text={178}>
          <div>
            <Narrow>MA1:112.3万</Narrow>
          </div>
          <ArrowMark down />
        </VolumeValue>
        <VolumeValue $c="#dc1cd6" $w={218} $text={178}>
          <div>
            <Narrow>MA2:89.01万</Narrow>
          </div>
          <ArrowMark down />
        </VolumeValue>
        <VolumeValue $c="#1f8f1b" $w={218} $text={178}>
          <div>
            <Narrow>MA3:126.0万</Narrow>
          </div>
          <ArrowMark down />
        </VolumeValue>
        <Spring />
        <CollapseButton>
          <svg width="18" height="28" viewBox="0 0 18 28" fill="none" stroke="#fff" strokeWidth="4">
            <path d="M15 3L4 14L15 25" />
          </svg>
        </CollapseButton>
      </VolumeRow>

      <VolumeChart>
        <VolumePlot />
      </VolumeChart>
      <TimeAxis>
        <AxisTicks />
        <DateRow>
          <span>20230505</span>
          <span>20240301</span>
          <span>20250110</span>
          <span>20251118</span>
        </DateRow>
      </TimeAxis>

      <Banner>
        <MegaphoneGlyph />
        <BannerText>更低交易费率的ETF来了！宽基行业都能投</BannerText>
        <BannerDivider />
        <Cross size={30} width={2.6} color={BLUE} />
      </Banner>
    </ChartPanel>

    <SectionTabs>
      <SectionTab $on>
        股吧
        <Underline />
      </SectionTab>
      {["盘口", "资讯", "公告", "研报", "财务", "资料"].map((name) => (
        <SectionTab key={name}>{name}</SectionTab>
      ))}
    </SectionTabs>

    <Community>
      <CardRow>
        <Card>
          <PodiumArt />
          <CardTitle>
            <PodiumBadge />
            <CardName>人气榜</CardName>
            <svg width="13" height="22" viewBox="0 0 13 22" fill="none" stroke="#86807f" strokeWidth="2.500">
              <path d="M2 1L11 11L2 21" />
            </svg>
          </CardTitle>
          <RankLine $top={25}>
            A股市场排名第<RankNumber>28</RankNumber>名
          </RankLine>
          <RankLine $top={17}>
            较昨日
            <svg width="24" height="32" viewBox="0 0 24 32" fill="#b84a1c">
              <path d="M12 0L23 14H14.500V31H9.500V14H1Z" />
            </svg>
            <RankNumber $gap={5}>27</RankNumber>名
          </RankLine>
        </Card>
        <Card>
          <VersusArt />
          <CardTitle>
            <VersusBadge />
            <CardName>多空看盘</CardName>
          </CardTitle>
          <VoteBar>
            <VoteSide>
              <VoteCircle>
                <svg width="22" height="18" viewBox="0 0 22 18" fill="#e8501a" stroke="#e8501a" strokeWidth="3" strokeLinejoin="round">
                  <path d="M11 2L20 16H2Z" />
                </svg>
              </VoteCircle>
              <VoteText>
                <span>看涨</span>
                <span>**%</span>
              </VoteText>
            </VoteSide>
            <VoteSide $down>
              <VoteText>
                <span>看跌</span>
                <span>**%</span>
              </VoteText>
              <VoteCircle $down>
                <svg width="22" height="18" viewBox="0 0 22 18" fill="#43b368" stroke="#43b368" strokeWidth="3" strokeLinejoin="round">
                  <path d="M11 16L20 2H2Z" />
                </svg>
              </VoteCircle>
            </VoteSide>
          </VoteBar>
        </Card>
      </CardRow>
      <PostFilter>
        <FilterName $c="#e2e2e2" $size={39.5} $weight={700}>
          最新
        </FilterName>
        <FilterGlyph $l={9} $r={58} $t={14}>
          <svg width="21" height="14" viewBox="0 0 21 14" fill="none" stroke="#8f8f8f" strokeWidth="3">
            <path d="M1 1L10.500 12L20 1" />
          </svg>
        </FilterGlyph>
        <FilterName $c="#b3b3b3" $size={39.5} $weight={600}>
          最热
        </FilterName>
        <Spring />
        <FilterGlyph $l={0} $r={18} $t={-1}>
          <svg width="38" height="40" viewBox="0 0 38 40" fill="none" stroke="#d0d0d0" strokeWidth="3.600" strokeLinejoin="round">
            <path d="M2 2H36V6L25 21V38L13 32V21L2 6Z" />
          </svg>
        </FilterGlyph>
        <FilterName $c="#6e6e70" $size={37}>
          全部
        </FilterName>
      </PostFilter>
    </Community>

    <ActionBar>
      <SectorCell>
        <svg width="20" height="7" viewBox="0 0 20 7" fill={GREY}>
          <path d="M10 0L20 7H0Z" />
        </svg>
        <SectorIndex>551.05</SectorIndex>
        <SectorLine>
          环保行业<b>−1.11%</b>
        </SectorLine>
      </SectorCell>
      {actions.map((a) => (
        <Action key={a.name}>
          <svg width="58" height="56" viewBox="0 0 58 56" fill="none" stroke="currentColor" strokeWidth="2.800" strokeLinecap="round" strokeLinejoin="round">
            {a.art}
          </svg>
          {a.name}
        </Action>
      ))}
    </ActionBar>

    <SystemNav>
      <svg width="34" height="34" viewBox="0 0 34 34" stroke="currentColor" strokeWidth="2.800">
        <path d="M3 4.500H33M3 17H33M3 29.500H33" />
      </svg>
      <svg width="34" height="34" viewBox="0 0 34 34" fill="none" stroke="currentColor" strokeWidth="2.800">
        <rect x="2.500" y="2.500" width="29" height="29" rx="6" />
      </svg>
      <svg width="34" height="34" viewBox="0 0 34 34" fill="none" stroke="currentColor" strokeWidth="2.600">
        <path d="M28 1.500L12 17L28 32.500" />
      </svg>
    </SystemNav>
  </Page>
);

export default App;
